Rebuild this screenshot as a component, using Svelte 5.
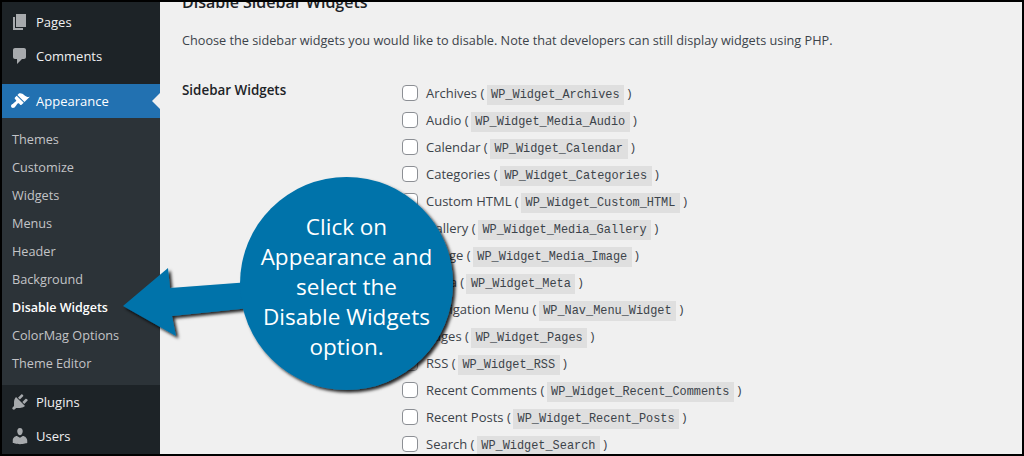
<script>
  const topItems = [
    { label: 'Pages', icon: 'pages' },
    { label: 'Comments', icon: 'comments' },
  ]
  const subItems = ['Themes', 'Customize', 'Widgets', 'Menus', 'Header', 'Background', 'Disable Widgets', 'ColorMag Options', 'Theme Editor']
  const bottomItems = [
    { label: 'Plugins', icon: 'plugins' },
    { label: 'Users', icon: 'users' },
  ]
  const widgets = [
    ['Archives', 'WP_Widget_Archives'],
    ['Audio', 'WP_Widget_Media_Audio'],
    ['Calendar', 'WP_Widget_Calendar'],
    ['Categories', 'WP_Widget_Categories'],
    ['Custom HTML', 'WP_Widget_Custom_HTML'],
    ['Gallery', 'WP_Widget_Media_Gallery'],
    ['Image', 'WP_Widget_Media_Image'],
    ['Meta', 'WP_Widget_Meta'],
    ['Navigation Menu', 'WP_Nav_Menu_Widget'],
    ['Pages', 'WP_Widget_Pages'],
    ['RSS', 'WP_Widget_RSS'],
    ['Recent Comments', 'WP_Widget_Recent_Comments'],
    ['Recent Posts', 'WP_Widget_Recent_Posts'],
    ['Search', 'WP_Widget_Search'],
  ]
  const calloutLines = ['Click on', 'Appearance and', 'select the', 'Disable Widgets', 'option.']
  const arrow = 'M123 306 L168 268 L170 288 L250 282 L250 308 L172 316 L176 336 Z'

  // dashicons, 20x20 grid
  const icons = {
    pages: 'M6 15V2h10v13H6zm-1 1h8v2H3V5h2v11z',
    comments: 'M5 2h9c1.100 0 2 .9 2 2v7c0 1.100-.9 2-2 2h-2l-5 5v-5H5c-1.100 0-2-.9-2-2V4c0-1.100.9-2 2-2z',
    appearance: 'M14.480 11.060L7.410 3.990l1.500-1.500c.5-.56 2.300-.47 3.510.32 1.210.8 1.430 1.280 2.910 2.100 1.180.64 2.450 1.260 4.450.85zm-.71.71L6.700 4.700 4.930 6.470c-.39.39-.39 1.020 0 1.410l1.060 1.060c.39.39.39 1.030 0 1.420-.6.6-1.430 1.110-2.210 1.690-.35.26-.7.53-1.010.84C1.430 13.230 1 14.250 1 15c0 1.100.9 2 2 2 .75 0 1.770-.43 2.130-1.200.31-.31.58-.66.84-1.010.58-.78 1.090-1.610 1.690-2.210.39-.39 1.030-.39 1.420 0l1.060 1.060c.39.39 1.020.39 1.410 0z',
    plugins: 'M13.110 4.360L9.870 7.600 8 5.730l3.240-3.240c.35-.34 1.050-.2 1.560.32.52.51.66 1.210.31 1.550zm-8 1.770l.91-1.120 9.010 9.010-1.190.84c-.71.71-2.630 1.160-3.820 1.160H6.140L4.900 17.260c-.59.59-1.540.59-2.120 0-.59-.58-.59-1.530 0-2.120l1.240-1.240v-3.880c0-1.130.46-3.050 1.090-3.890zm7.260 3.970l3.240-3.240c.34-.35 1.040-.21 1.550.31.52.51.66 1.210.31 1.550l-3.240 3.250z',
    users: 'M10 9.250c-2.270 0-2.730-3.440-2.730-3.440C7 4.020 7.820 2 9.970 2c2.160 0 2.980 2.020 2.710 3.810 0 0-.46 3.440-2.680 3.440zm0 2.570L12.720 10c2.390 0 4.520 2.330 4.520 4.530v2.490s-3.650 1.130-7.240 1.130c-3.650 0-7.240-1.130-7.240-1.130v-2.490c0-2.250 1.940-4.480 4.150-4.480z',
  }
</script>

{#snippet icon(name)}
  <svg class="icon" viewBox="0 0 20 20" aria-hidden="true"><path d={icons[name]} /></svg>
{/snippet}

<div class="frame">
  <nav class="sidebar">
    <ul class="menu">
      {#each topItems as item}
        <li>{@render icon(item.icon)}<span>{item.label}</span></li>
      {/each}
    </ul>
    <div class="current">
      {@render icon('appearance')}<span>Appearance</span>
      <i class="notch"></i>
    </div>
    <ul class="submenu">
      {#each subItems as item}
        <li class:active={item === 'Disable Widgets'}>{item}</li>
      {/each}
    </ul>
    <ul class="menu lower">
      {#each bottomItems as item}
        <li>{@render icon(item.icon)}<span>{item.label}</span></li>
      {/each}
    </ul>
  </nav>

  <main class="content">
    <h2>Disable Sidebar Widgets</h2>
    <p>Choose the sidebar widgets you would like to disable. Note that developers can still display widgets using PHP.</p>
    <div class="settings">
      <div class="field-label">Sidebar Widgets</div>
      <div class="widgets">
        {#each widgets as [name, cls]}
          <label>
            <input type="checkbox" />
            <span>{name} ( <code>{cls}</code> )</span>
          </label>
        {/each}
      </div>
    </div>
  </main>

  <svg class="callout" viewBox="0 0 1024 456" aria-hidden="true">
    <defs>
      <filter id="drop" x="-20%" y="-20%" width="140%" height="140%">
        <feDropShadow dx="2.500" dy="2.500" stdDeviation="1.500" flood-color="#000" flood-opacity="0.85" />
      </filter>
    </defs>
    <g filter="url(#drop)" fill="#0073aa">
      <path d={arrow} />
      <circle cx="346.500" cy="283.500" r="106.500" />
    </g>
  </svg>
  <div class="callout-text">
    {#each calloutLines as line}
      <div>{line}</div>
    {/each}
  </div>
</div>

<style>
  :global(body) {
    margin: 0;
    background: #000;
  }

  .frame {
    position: relative;
    display: flex;
    box-sizing: border-box;
    width: 1024px;
    height: 456px;
    border: 2px solid #000;
    overflow: hidden;
    background: #f0f0f0;
    font-family: 'Open Sans', 'Noto Sans', sans-serif;
    font-size: 13px;
    color: #3c434a;
  }

  .sidebar {
    flex: 0 0 158px;
    background: #1d2327;
    color: #f0f0f1;
    margin-top: -2px;
  }

  ul {
    margin: 0;
    padding: 0;
    list-style: none;
  }

  .menu {
    padding-top: 5px;
  }

  .menu li,
  .current {
    display: flex;
    align-items: center;
    height: 34px;
    gap: 6px;
    padding-left: 8px;
    font-size: 13px;
  }

  .menu .icon {
    fill: #a7aaad;
  }

  .icon {
    width: 20px;
    height: 20px;
    flex: none;
  }

  .current {
    position: relative;
    margin-top: 11px;
    background: #2271b1;
    color: #fff;
  }

  .current .icon {
    fill: #fff;
  }

  .notch {
    position: absolute;
    right: 0;
    top: 9px;
    border: 8px solid transparent;
    border-right-color: #f0f0f0;
    border-left-width: 0;
  }

  .submenu {
    box-sizing: border-box;
    height: 267px;
    padding-top: 7px;
    background: #2c3338;
    color: #c3c4c7;
  }

  .submenu li {
    display: flex;
    align-items: center;
    height: 28px;
    padding-left: 10px;
    font-size: 12.700px;
  }

  .submenu .active {
    color: #fff;
    font-weight: 600;
    font-size: 12.500px;
  }

  .menu.lower {
    padding-top: 0;
  }

  .content {
    flex: 1;
    padding-left: 22px;
    min-width: 0;
  }

  h2 {
    margin: -12px 0 0;
    font-size: 16px;
    line-height: 24px;
    font-weight: 600;
    color: #1d2327;
  }

  p {
    margin: 16px 0 0;
    font-size: 12.700px;
    line-height: 20px;
  }

  .settings {
    display: flex;
    margin-top: 30px;
  }

  .field-label {
    flex: 0 0 220px;
    font-size: 13.400px;
    font-weight: 600;
    color: #1d2327;
    line-height: 20px;
  }

  .widgets {
    margin-top: -1px;
  }

  label {
    display: flex;
    align-items: center;
    height: 27px;
    gap: 8px;
    font-size: 13px;
    white-space: nowrap;
  }

  input {
    appearance: none;
    box-sizing: border-box;
    width: 16px;
    height: 16px;
    margin: 0;
    border: 1px solid #8c8f94;
    border-radius: 4px;
    background: #fff;
  }

  code {
    margin-left: -1px;
    padding: 3px 4.500px;
    background: rgba(0, 0, 0, 0.07);
    font-family: 'Liberation Mono', monospace;
    font-size: 11.900px;
  }

  .callout {
    position: absolute;
    left: -2px;
    top: -2px;
    width: 1024px;
    height: 456px;
    pointer-events: none;
  }

  .callout-text {
    position: absolute;
    left: 238px;
    top: 210px;
    width: 213px;
    text-align: center;
    color: #fff;
    font-size: 22.500px;
    line-height: 30px;
  }
</style>
